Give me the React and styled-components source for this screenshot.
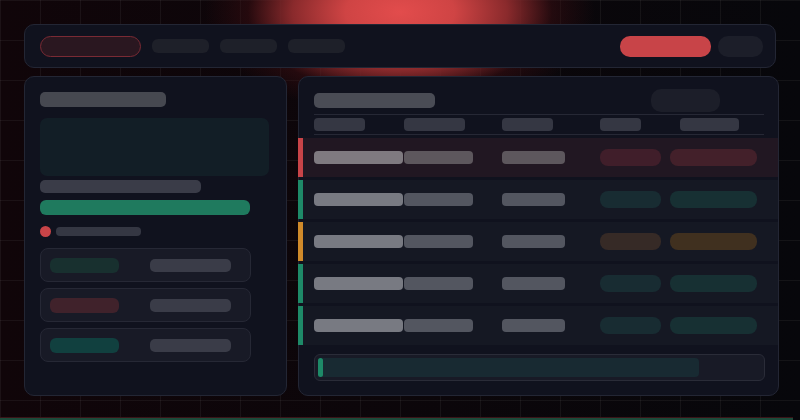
import styled, { createGlobalStyle } from "styled-components"

const Global = createGlobalStyle`
  html, body { margin: 0; padding: 0; background: #08070b; }
  body { font-family: "Inter", "Liberation Sans", sans-serif; }
`

const Page = styled.div`
  width: 800px;
  height: 420px;
  overflow: hidden;
  display: flex;
  flex-direction: column;
  background:
    radial-gradient(ellipse 195px 105px at 400px 12px, #e24c4c 0%, #cf4444 28%, #8a2a2c 55%, rgba(60, 14, 18, 0.5) 78%, rgba(16, 5, 9, 0) 100%),
    linear-gradient(90deg, rgba(255,255,255,0.05) 1px, transparent 1px) 0 0 / 40px 40px,
    linear-gradient(0deg, transparent 39px, rgba(255,255,255,0.05) 39px) 0 0 / 40px 40px,
    linear-gradient(90deg, #100509, #07070b);
`

const Content = styled.div`
  display: flex;
  flex-direction: column;
  gap: 8px;
  padding: 24px 0 0 24px;
`

const TopBar = styled.div`
  box-sizing: border-box;
  width: 752px;
  height: 44px;
  display: flex;
  align-items: center;
  gap: 11px;
  padding: 0 12px 0 15px;
  background: #10121e;
  border: 1px solid #232634;
  border-radius: 10px;
`

const Brand = styled.div`
  box-sizing: border-box;
  width: 101px;
  height: 21px;
  border-radius: 11px;
  background: #2a1720;
  border: 1px solid #7a2a34;
`

const NavPill = styled.div`
  width: 57px;
  height: 14px;
  border-radius: 6px;
  background: #1e2029;
`

const Spacer = styled.div`
  flex: 1;
`

const Button = styled.div`
  width: ${p => p.w}px;
  height: 21px;
  border-radius: 10px;
  background: ${p => p.bg};
  margin-left: ${p => p.ml || 0}px;
`

const Main = styled.div`
  display: flex;
  gap: 11px;
  height: 320px;
`

const Panel = styled.div`
  box-sizing: border-box;
  width: ${p => p.w}px;
  height: 320px;
  background: #10121e;
  border: 1px solid #232634;
  border-radius: 10px;
  display: flex;
  flex-direction: column;
`

const LeftBody = styled.div`
  display: flex;
  flex-direction: column;
  padding: 15px 0 0 15px;
`

const Bar = styled.div`
  width: ${p => p.w}px;
  height: ${p => p.h}px;
  border-radius: ${p => p.r || 5}px;
  background: ${p => p.bg};
  margin-top: ${p => p.mt || 0}px;
  flex-shrink: 0;
`

const StatusRow = styled.div`
  display: flex;
  align-items: center;
  gap: 5px;
  margin-top: 11px;
  height: 11px;
`

const Dot = styled.div`
  width: 11px;
  height: 11px;
  border-radius: 50%;
  background: #c84448;
`

const CardList = styled.div`
  display: flex;
  flex-direction: column;
  gap: 6px;
  margin-top: 11px;
`

const Card = styled.div`
  box-sizing: border-box;
  width: 211px;
  height: 34px;
  display: flex;
  align-items: center;
  padding-left: 9px;
  gap: 31px;
  background: #181a26;
  border: 1px solid #262835;
  border-radius: 8px;
`

const RightHead = styled.div`
  display: flex;
  align-items: center;
  height: 24px;
  margin: 11px 58px 0 15px;
  justify-content: space-between;
`

const Divider = styled.div`
  height: 1px;
  background: #262835;
  margin: ${p => p.mt}px 14px 0 15px;
`

const HeaderCells = styled.div`
  display: grid;
  grid-template-columns: 90px 98px 98px 80px auto;
  margin: 3px 0 0 15px;
  height: 13px;
`

const Rows = styled.div`
  display: flex;
  flex-direction: column;
  gap: 3px;
  margin-top: 3px;
`

const Row = styled.div`
  position: relative;
  height: 39px;
  display: grid;
  grid-template-columns: 90px 98px 98px 70px auto;
  align-items: center;
  padding-left: 15px;
  background: ${p => p.hot ? "#211722" : "#151823"};
`

const Accent = styled.div`
  position: absolute;
  left: -1px;
  top: 0;
  bottom: 0;
  width: 5px;
  background: ${p => p.c};
`

const Cell = styled.div`
  width: ${p => p.w}px;
  height: 13px;
  border-radius: 4px;
  background: ${p => p.bg};
`

const Tag = styled.div`
  width: ${p => p.w}px;
  height: 17px;
  border-radius: 8px;
  background: ${p => p.bg};
`

const Progress = styled.div`
  box-sizing: border-box;
  height: 27px;
  margin: 9px 13px 0 15px;
  padding: 3px;
  background: #181a26;
  border: 1px solid #2a2c38;
  border-radius: 6px;
  display: flex;
`

const Track = styled.div`
  width: 381px;
  height: 19px;
  border-radius: 4px;
  background: #182a32;
  display: flex;
`

const Knob = styled.div`
  width: 5px;
  height: 19px;
  border-radius: 3px;
  background: #1e8a68;
`

const Footer = styled.div`
  margin-top: 21px;
  width: 793px;
  height: 3px;
  border-top: 1px solid #3a1418;
  background: #1c4a3a;
`

const cards = ["#18302f", "#40222b", "#11403f"]

const tone = {
  red: { bar: "#c84448", a: "#401e2a", b: "#43202a" },
  green: { bar: "#1e8a68", a: "#182c32", b: "#173033" },
  amber: { bar: "#d08a2a", a: "#362a26", b: "#40301f" },
}

const rows = ["red", "green", "amber", "green", "green"]

export default function App() {
  return (
    <Page>
      <Global />
      <Content>
        <TopBar>
          <Brand />
          <NavPill />
          <NavPill />
          <NavPill />
          <Spacer />
          <Button w={91} bg="#c84448" />
          <Button w={45} bg="#1c1e29" ml={-4} />
        </TopBar>
        <Main>
          <Panel w={263}>
            <LeftBody>
              <Bar w={126} h={15} bg="#464850" />
              <Bar w={229} h={58} r={7} bg="#121e26" mt={11} />
              <Bar w={161} h={13} bg="#3a3c48" mt={4} />
              <Bar w={210} h={15} r={6} bg="#1f7a5e" mt={7} />
              <StatusRow>
                <Dot />
                <Bar w={85} h={9} r={4} bg="#353743" />
              </StatusRow>
              <CardList>
                {cards.map((c, i) => (
                  <Card key={i}>
                    <Bar w={69} h={15} r={6} bg={c} />
                    <Bar w={81} h={13} bg="#3a3c48" />
                  </Card>
                ))}
              </CardList>
            </LeftBody>
          </Panel>
          <Panel w={481}>
            <RightHead>
              <Bar w={121} h={15} bg="#4a4c55" />
              <Bar w={69} h={23} r={10} bg="#1c1e29" />
            </RightHead>
            <Divider mt={2} />
            <HeaderCells>
              <Cell w={51} bg="#353743" />
              <Cell w={61} bg="#353743" />
              <Cell w={51} bg="#353743" />
              <Cell w={41} bg="#353743" />
              <Cell w={59} bg="#353743" />
            </HeaderCells>
            <Divider mt={3} />
            <Rows>
              {rows.map((k, i) => {
                const t = tone[k]
                const hot = i === 0
                return (
                  <Row key={i} hot={hot}>
                    <Accent c={t.bar} />
                    <Cell w={89} bg={hot ? "#7f7a80" : "#787a82"} />
                    <Cell w={69} bg={hot ? "#5d575d" : "#535660"} />
                    <Cell w={63} bg={hot ? "#5d575d" : "#535660"} />
                    <Tag w={61} bg={t.a} />
                    <Tag w={87} bg={t.b} />
                  </Row>
                )
              })}
            </Rows>
            <Progress>
              <Track>
                <Knob />
              </Track>
            </Progress>
          </Panel>
        </Main>
      </Content>
      <Footer />
    </Page>
  )
}
